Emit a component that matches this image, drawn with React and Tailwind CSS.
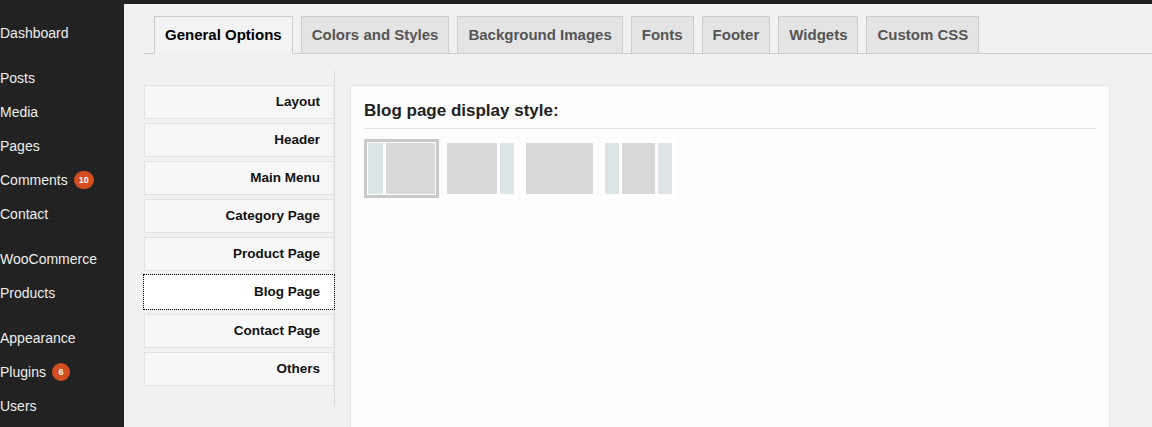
const menu = [
  [{ label: "Dashboard" }],
  [
    { label: "Posts" },
    { label: "Media" },
    { label: "Pages" },
    { label: "Comments", badge: "10" },
    { label: "Contact" },
  ],
  [{ label: "WooCommerce" }, { label: "Products" }],
  [{ label: "Appearance" }, { label: "Plugins", badge: "6" }, { label: "Users" }],
];

const tabs = [
  "General Options",
  "Colors and Styles",
  "Background Images",
  "Fonts",
  "Footer",
  "Widgets",
  "Custom CSS",
];

const sections = [
  "Layout",
  "Header",
  "Main Menu",
  "Category Page",
  "Product Page",
  "Blog Page",
  "Contact Page",
  "Others",
];

function Sidebar() {
  return (
    <aside className="w-[124px] flex-none bg-[#222222] pt-[16px] text-[14px] text-[#eeeeee]">
      {menu.map((group, i) => (
        <div key={i} className="mb-[11px]">
          {group.map((item) => (
            <div key={item.label} className="flex h-[34px] items-center gap-[6px] whitespace-nowrap">
              <span>{item.label}</span>
              {item.badge && (
                <span className="grid h-[18px] min-w-[18px] place-items-center rounded-full bg-[#d54e21] px-[5px] text-[9px] font-bold leading-none text-white">
                  {item.badge}
                </span>
              )}
            </div>
          ))}
        </div>
      ))}
    </aside>
  );
}

function Thumb({ selected, children }) {
  return (
    <div
      className={
        selected
          ? "border-[3px] border-[#c8c8c8] bg-white p-px"
          : "border-[3px] border-transparent bg-white p-px"
      }
    >
      <div className="flex h-[51px] w-[67px] gap-[3px]">{children}</div>
    </div>
  );
}

const blue = "h-full w-[14px] flex-none bg-[#dde4e8]";
const gray = "h-full flex-1 bg-[#d8d8d8]";

export default function App() {
  return (
    <div
      className="flex h-[427px] w-[1152px] overflow-hidden bg-[#f1f1f1]"
      style={{ fontFamily: '"Liberation Sans", Arial, sans-serif' }}
    >
      <Sidebar />
      <main className="flex min-w-0 flex-1 flex-col">
        <div className="h-[4px] flex-none bg-[#1f1f1f]" />
        <div className="ml-[20px] mt-[12px] flex gap-[8px] border-b border-[#cccccc] pl-[10px]">
          {tabs.map((t, i) => (
            <div
              key={t}
              className={
                i === 0
                  ? "-mb-px flex h-[38px] items-center border border-[#cccccc] border-b-[#f3f3f3] bg-[#f3f3f3] px-[10px] text-[15px] font-bold text-black"
                  : "flex h-[37px] items-center border border-b-0 border-[#cccccc] bg-[#e4e4e4] px-[10px] text-[15px] font-bold text-[#555555]"
              }
            >
              {t}
            </div>
          ))}
        </div>

        <div className="ml-[20px] mt-[16px] flex flex-1 items-start">
          <nav className="h-[336px] w-[191px] flex-none border-r border-[#dddddd] pt-[15px]">
            {sections.map((s) => (
              <div
                key={s}
                className={
                  s === "Blog Page"
                    ? "mb-[5px] flex h-[34px] items-center justify-end bg-white pr-[14px] text-[13.5px] font-bold text-[#111111] outline outline-1 outline-dotted outline-black"
                    : "mb-[4px] flex h-[34px] items-center justify-end border border-[#e3e3e3] bg-[#f7f7f7] pr-[13px] text-[13.5px] font-bold text-[#111111]"
                }
              >
                {s}
              </div>
            ))}
          </nav>

          <section className="ml-[15px] mt-[15px] h-[400px] w-[760px] flex-none border border-[#e6e6e6] bg-[#fcfcfc] px-[13px] pt-[12px]">
            <h2 className="border-b border-[#e5e5e5] pb-[4px] text-[17px] font-bold text-[#222222]">
              Blog page display style:
            </h2>
            <div className="mt-[10px] flex gap-[4px]">
              <Thumb selected>
                <div className="h-full w-[15px] flex-none bg-[#dde4e8]" />
                <div className={gray} />
              </Thumb>
              <Thumb>
                <div className={gray} />
                <div className={blue} />
              </Thumb>
              <Thumb>
                <div className={gray} />
              </Thumb>
              <Thumb>
                <div className={blue} />
                <div className={gray} />
                <div className={blue} />
              </Thumb>
            </div>
          </section>
        </div>
      </main>
    </div>
  );
}
